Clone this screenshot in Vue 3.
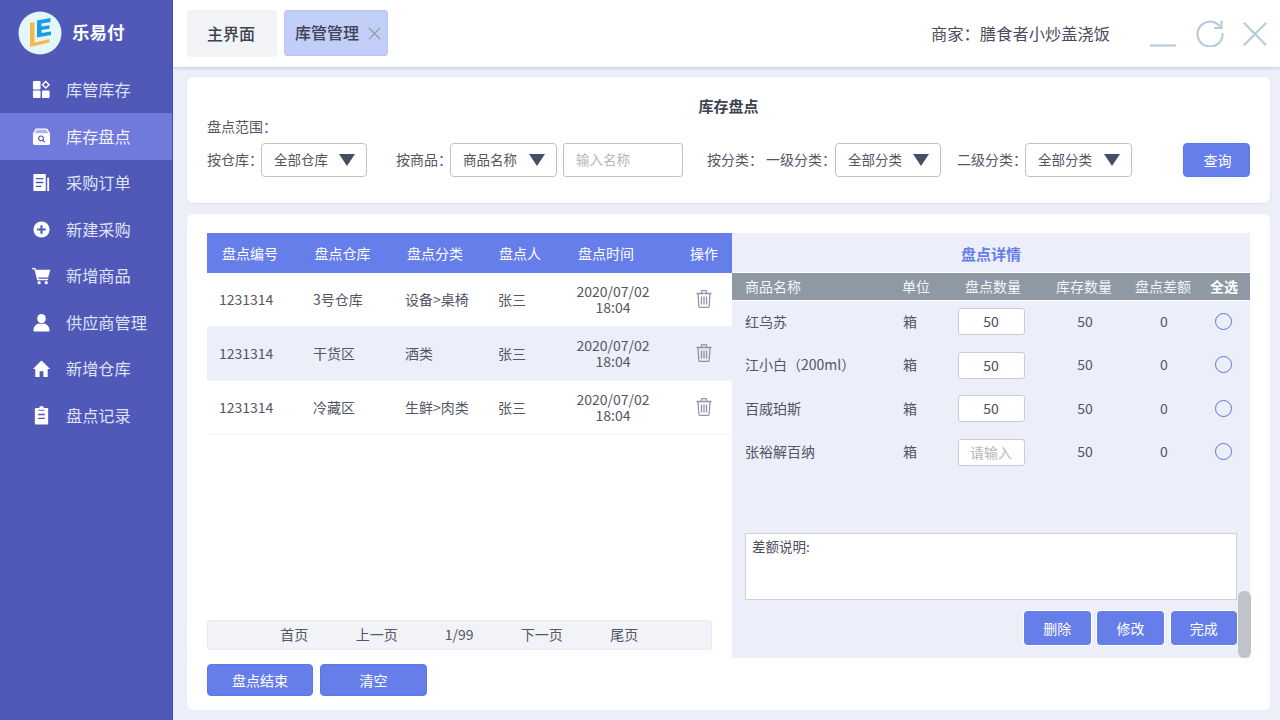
<script setup>
const nav = [
  { label: '库管库存', icon: 'grid' },
  { label: '库存盘点', icon: 'box', active: true },
  { label: '采购订单', icon: 'doc' },
  { label: '新建采购', icon: 'plus' },
  { label: '新增商品', icon: 'cart' },
  { label: '供应商管理', icon: 'user' },
  { label: '新增仓库', icon: 'home' },
  { label: '盘点记录', icon: 'clip' },
]
const filtersA = ['盘点编号', '盘点仓库', '盘点分类', '盘点人', '盘点时间', '操作']
const records = [
  { id: '1231314', store: '3号仓库', type: '设备>桌椅', who: '张三' },
  { id: '1231314', store: '干货区', type: '酒类', who: '张三' },
  { id: '1231314', store: '冷藏区', type: '生鲜>肉类', who: '张三' },
]
const detailHead = ['商品名称', '单位', '盘点数量', '库存数量', '盘点差额', '全选']
const details = [
  { name: '红乌苏', qty: '50' },
  { name: '江小白（200ml）', qty: '50' },
  { name: '百威珀斯', qty: '50' },
  { name: '张裕解百纳', qty: '' },
]
const pager = ['首页', '上一页', '1/99', '下一页', '尾页']
</script>

<template>
  <div class="app">
    <aside class="side">
      <div class="brand">
        <svg class="logo" viewBox="0 0 44 44">
          <circle cx="22" cy="22" r="21.500" fill="#e3f7fb" />
          <path d="M12 11.500h4.500v20l15-3.500v3.500l-19.500 4.500z" fill="#f7b84a" />
          <path d="M19 9.500l13.500-2.500v4l-9 1.500v3l8-1.200v3.500l-8 1.200v3l9.500-1.500v3.500l-14 2.500z" fill="#1c9be6" />
        </svg>
        <span class="brand-name">乐易付</span>
      </div>
      <nav>
        <div v-for="n in nav" :key="n.label" class="nav-item" :class="{ active: n.active }">
          <svg class="nav-icon" viewBox="0 0 20 20" fill="#fff">
            <template v-if="n.icon === 'grid'">
              <rect x="1" y="1" width="8" height="9" rx="1" />
              <rect x="1" y="11" width="8" height="8" rx="1" />
              <rect x="10.500" y="11" width="8" height="8" rx="1" />
              <path d="M14.500 1.500l3.500 3.500-3.500 3.500-3.500-3.500z" fill="none" stroke="#fff" stroke-width="1.500" />
            </template>
            <template v-else-if="n.icon === 'box'">
              <path d="M4 1.500h12l3 5v10.500a2 2 0 0 1-2 2H3a2 2 0 0 1-2-2V6.500z" />
              <path d="M2.500 6.500l2.500-3.500h10l2.500 3.500z" fill="#7079dc" opacity="0.550" />
              <circle cx="9.500" cy="12" r="2.500" fill="none" stroke="#5059b8" stroke-width="1.200" />
              <path d="M11.500 14l2 2" stroke="#5059b8" stroke-width="1.200" />
            </template>
            <template v-else-if="n.icon === 'doc'">
              <rect x="1.500" y="1" width="13" height="18" rx="0.500" />
              <rect x="16" y="5" width="2" height="14" />
              <path d="M4 6h8M4 10h8M4 14h6" stroke="#5059b8" stroke-width="1.400" />
            </template>
            <template v-else-if="n.icon === 'plus'">
              <circle cx="10" cy="10" r="8.500" />
              <path d="M10 5.500v9M5.500 10h9" stroke="#5059b8" stroke-width="2.200" />
            </template>
            <template v-else-if="n.icon === 'cart'">
              <path d="M0 2h3.500l.8 2h15l-2.300 8H6.500l.4 1.500H17v1.500H5.500L2.500 3.500H0z" />
              <circle cx="7.500" cy="17.500" r="1.700" />
              <circle cx="15" cy="17.500" r="1.700" />
            </template>
            <template v-else-if="n.icon === 'user'">
              <ellipse cx="10" cy="6" rx="4.500" ry="5" />
              <path d="M1.500 18.500c0-5 3.500-7 5.500-7.500 2 1 4 1 6 0 2 .5 5.500 2.500 5.500 7.500a1 1 0 0 1-1 1h-15a1 1 0 0 1-1-1z" />
            </template>
            <template v-else-if="n.icon === 'home'">
              <path d="M10 1.500L19 10.500h-2.500v8.500h-4.500v-6h-4v6H3.500v-8.500H1z" />
            </template>
            <template v-else>
              <path d="M7.500 2a2.500 2 0 0 1 5 0h3.500a1 1 0 0 1 1 1v15.500a1 1 0 0 1-1 1H4a1 1 0 0 1-1-1V3a1 1 0 0 1 1-1z" />
              <path d="M6.500 9h7M6.500 13h7" stroke="#5059b8" stroke-width="1.500" />
              <path d="M7 4.500h6" stroke="#5059b8" stroke-width="1" />
            </template>
          </svg>
          <span class="nav-label">{{ n.label }}</span>
        </div>
      </nav>
    </aside>

    <div class="main">
      <header class="top">
        <div class="tab tab-home">主界面</div>
        <div class="tab tab-active">
          库管管理
          <svg class="tab-x" viewBox="0 0 14 14"><path d="M1 1l12 12M13 1L1 13" stroke="#8f9199" stroke-width="1.100" fill="none" /></svg>
        </div>
        <div class="merchant">商家：膳食者小炒盖浇饭</div>
        <svg class="win win-min" viewBox="0 0 26 28"><path d="M0 26.500h26" stroke="#b8ccd8" stroke-width="2.200" /></svg>
        <svg class="win win-ref" viewBox="0 0 28 28" fill="none" stroke="#b8ccd8" stroke-width="2.200">
          <path d="M24 7.500A12.500 12.500 0 1 0 26.500 14" />
          <path d="M25.500 1.500v7.500h-7.500" />
        </svg>
        <svg class="win win-close" viewBox="0 0 24 24"><path d="M.8.800l22.400 22.400M23.200.800L.8 23.200" stroke="#b8ccd8" stroke-width="2.200" fill="none" /></svg>
      </header>

      <section class="panel filter">
        <h2>库存盘点</h2>
        <div class="scope">盘点范围：</div>
        <div class="filter-row">
          <span class="lab">按仓库：</span>
          <div class="select w106">全部仓库<i class="arrow"></i></div>
          <span class="lab ml29">按商品：</span>
          <div class="select w107">商品名称<i class="arrow"></i></div>
          <div class="name-input">输入名称</div>
          <span class="lab ml24">按分类：</span>
          <span class="lab ml10">一级分类：</span>
          <div class="select w106">全部分类<i class="arrow"></i></div>
          <span class="lab ml16">二级分类：</span>
          <div class="select w107">全部分类<i class="arrow"></i></div>
          <button class="btn query">查询</button>
        </div>
      </section>

      <section class="panel body">
        <div class="left">
          <div class="thead">
            <span v-for="h in filtersA" :key="h">{{ h }}</span>
          </div>
          <div v-for="(r, i) in records" :key="i" class="trow" :class="{ alt: i === 1 }">
            <span>{{ r.id }}</span>
            <span>{{ r.store }}</span>
            <span>{{ r.type }}</span>
            <span>{{ r.who }}</span>
            <span class="time">2020/07/02<br />18:04</span>
            <svg class="trash" viewBox="0 0 16 18" fill="none" stroke="#8e97a3" stroke-width="1.300">
              <path d="M.5 3.500h15M5.500 3.500V1.500a1 1 0 0 1 1-1h3a1 1 0 0 1 1 1v2" />
              <path d="M2 3.500l.8 12.500a1.500 1.500 0 0 0 1.500 1.400h7.400a1.500 1.500 0 0 0 1.500-1.400L14 3.500" />
              <path d="M5.500 6.500v8M8 6.500v8M10.500 6.500v8" />
            </svg>
          </div>
          <div class="spacer"></div>
          <div class="pager">
            <span v-for="p in pager" :key="p">{{ p }}</span>
          </div>
          <div class="left-actions">
            <button class="btn end">盘点结束</button>
            <button class="btn end clear">清空</button>
          </div>
        </div>

        <div class="right">
          <div class="right-title">盘点详情</div>
          <div class="dhead">
            <span v-for="h in detailHead" :key="h" :class="{ all: h === '全选' }">{{ h }}</span>
          </div>
          <div v-for="d in details" :key="d.name" class="drow">
            <span class="dname">{{ d.name }}</span>
            <span>箱</span>
            <span><input class="qty" :value="d.qty" placeholder="请输入" /></span>
            <span>50</span>
            <span>0</span>
            <span><i class="radio"></i></span>
          </div>
          <div class="spacer"></div>
          <textarea class="note" readonly>差额说明:</textarea>
          <div class="right-actions">
            <button class="btn act a66">删除</button>
            <button class="btn act">修改</button>
            <button class="btn act a66">完成</button>
          </div>
          <div class="thumb"></div>
        </div>
      </section>
    </div>
  </div>
</template>

<style>
html, body { margin: 0; background: #eceefa; }
</style>

<style scoped>
.app {
  width: 1280px;
  height: 720px;
  display: flex;
  overflow: hidden;
  background: #eceefa;
  color: #535665;
  font-family: "Noto Sans CJK SC", "Noto Sans", sans-serif;
  font-size: 14px;
}
.side {
  width: 173px;
  flex: none;
  background: #5059b8;
  border-right: 1px solid #4850ad;
  box-sizing: border-box;
}
.brand {
  height: 66.500px;
  display: flex;
  align-items: center;
  padding-left: 17.500px;
  gap: 10.500px;
}
.logo { width: 44px; height: 44px; }
.brand-name { color: #fff; font-size: 17.500px; font-weight: 700; padding-bottom: 3px; }
.nav-item {
  height: 46.500px;
  display: flex;
  align-items: center;
  padding-left: 32px;
  gap: 15px;
  color: #dfe2f7;
  font-size: 16.200px;
}
.nav-label { padding-bottom: 1px; }
.nav-item.active { background: #7079dc; color: #f2f3fd; }
.nav-icon { width: 19px; height: 19px; flex: none; }

.main { flex: 1; display: flex; flex-direction: column; min-width: 0; }
.top {
  height: 67px;
  flex: none;
  background: #fff;
  box-shadow: 0 1px 3px rgba(80, 90, 130, 0.25);
  display: flex;
  align-items: flex-start;
  padding: 10px 13px 0 14px;
  box-sizing: border-box;
  position: relative;
}
.tab {
  height: 47px;
  display: flex;
  align-items: center;
  border-radius: 3px;
  box-sizing: border-box;
  font-size: 16px;
  font-weight: 500;
  color: #3e4250;
  padding-bottom: 2px;
}
.tab-home { width: 90px; justify-content: center; background: #f2f3f7; padding-right: 2px; }
.tab-active {
  width: 104px;
  height: 46px;
  margin-left: 7px;
  padding-left: 10px;
  background: #c1cef8;
  border: 1px solid #b7c6f5;
}
.tab-x { width: 13px; height: 13px; margin-left: 9px; margin-top: 2px; }
.merchant { margin-left: auto; margin-top: 12px; font-size: 16.300px; color: #4a4d5c; line-height: 22px; width: 219px; white-space: nowrap; }
.win { flex: none; }
.win-min { width: 26px; height: 28px; margin-top: 9px; }
.win-ref { width: 28px; height: 28px; margin: 9px 0 0 20px; }
.win-close { width: 24px; height: 24px; margin: 12px 0 0 19px; }

.panel { background: #fff; border-radius: 6px; margin-left: 14px; width: 1083px; box-sizing: border-box; }
.filter { height: 126px; margin-top: 10px; padding: 19px 20px 0; box-shadow: 0 1px 3px rgba(80, 90, 130, 0.08); }
.filter h2 {
  margin: 0;
  text-align: center;
  font-size: 15px;
  font-weight: 700;
  line-height: 20px;
  color: #3e4250;
}
.scope { line-height: 20px; margin-top: 0; font-size: 14px; }
.filter-row { display: flex; align-items: center; margin-top: 7px; height: 34px; }
.lab { line-height: 32px; padding-bottom: 2px; white-space: nowrap; width: 54px; flex: none; }
.lab.ml29 { margin-left: 29px; }
.lab.ml24 { margin-left: 24px; width: 59px; }
.lab.ml10 { width: 69px; }
.lab.ml16 { margin-left: 16px; width: 68px; }
.select {
  height: 34px;
  border: 1px solid #bfc1cc;
  border-radius: 4px;
  box-sizing: border-box;
  padding: 0 0 2px 12px;
  display: flex;
  align-items: center;
  white-space: nowrap;
  font-size: 13.500px;
  flex: none;
  position: relative;
}
.w106 { width: 106px; }
.w107 { width: 107px; }
.arrow {
  position: absolute;
  right: 11px;
  top: 10px;
  width: 0;
  height: 0;
  border-left: 8px solid transparent;
  border-right: 8px solid transparent;
  border-top: 12px solid #474d63;
}
.name-input {
  width: 120px;
  height: 34px;
  margin-left: 6px;
  border: 1px solid #bfc1cc;
  border-radius: 3px;
  box-sizing: border-box;
  padding-left: 12px;
  line-height: 30px;
  color: #b5b7bf;
  flex: none;
  font-size: 13.500px;
}
.btn {
  border: 1px solid #5f77e6;
  background: #667eea;
  color: #fff;
  border-radius: 4px;
  font-family: inherit;
  font-size: 14px;
  padding: 0 0 1px;
  box-sizing: border-box;
}
.query { width: 67px; height: 34px; margin-left: 51px; flex: none; padding-left: 2px; }

.body {
  height: 496px;
  margin-top: 11px;
  padding: 19px 20px 0;
  display: flex;
  align-items: flex-start;
}
.left { width: 525px; height: 463px; flex: none; display: flex; flex-direction: column; }
.thead {
  height: 40px;
  flex: none;
  background: #667eea;
  color: #fff;
  display: grid;
  grid-template-columns: 86px 99px 86px 84px 88px 26px 56px;
  align-items: center;
  text-align: center;
}
.thead span:last-child { grid-column: 7; }
.trow {
  height: 54px;
  flex: none;
  display: grid;
  grid-template-columns: 94px 92px 93px 60px 110px 1fr;
  align-items: center;
  padding: 0 0 2px 12px;
  border-bottom: 1px solid #f3f4fb;
  box-sizing: border-box;
  line-height: 16px;
  white-space: nowrap;
}
.trow.alt { background: #eceefa; }
.time { text-align: center; }
.trash { width: 16px; height: 18px; justify-self: center; margin-left: 8px; }
.spacer { flex: 1; }
.pager {
  width: 505px;
  height: 30px;
  flex: none;
  box-sizing: border-box;
  background: #f2f3f7;
  border: 1px solid #e8eaf8;
  border-radius: 3px;
  display: flex;
  align-items: center;
  padding: 0 0 2px 45px;
}
.pager span { width: 82.500px; text-align: center; }
.left-actions { display: flex; gap: 7px; margin-top: 14px; flex: none; }
.end { width: 106px; height: 32px; }
.end.clear { width: 107px; }

.right {
  width: 518px;
  height: 425px;
  flex: none;
  background: #eceefa;
  display: flex;
  flex-direction: column;
  position: relative;
}
.right-title {
  height: 40px;
  flex: none;
  text-align: center;
  line-height: 41px;
  color: #667eea;
  font-weight: 700;
  font-size: 15px;
}
.dhead {
  height: 27px;
  flex: none;
  background: #8f99a5;
  color: #f3f5f8;
  display: grid;
  grid-template-columns: 13px 141px 60px 94px 88px 70px 52px;
  align-items: center;
  text-align: center;
  box-sizing: border-box;
  padding-bottom: 2px;
  box-shadow: 0 -1px 0 #fff, 0 1px 0 #fff;
}
.dhead span:first-child { grid-column: 2; text-align: left; }
.dhead .all { font-weight: 700; color: #fff; }
.drow {
  height: 43.500px;
  flex: none;
  display: grid;
  grid-template-columns: 13px 135px 60px 102px 86px 72px 46px;
  align-items: center;
  text-align: center;
  box-sizing: border-box;
}
.drow > span { line-height: 20px; }
.drow > span:not(:nth-child(3)):not(:nth-child(6)) { padding-bottom: 2px; }
.drow .dname { grid-column: 2; text-align: left; white-space: nowrap; }
.qty {
  width: 67px;
  height: 27px;
  border: 1px solid #c9cbd6;
  border-radius: 3px;
  box-sizing: border-box;
  background: #fff;
  text-align: center;
  font-family: inherit;
  font-size: 14px;
  color: #4a4d5c;
  padding: 0 0 1px;
  display: block;
  margin: 0 auto;
}
.qty::placeholder { color: #b5b7bf; opacity: 1; }
.radio {
  display: block;
  width: 17px;
  height: 17px;
  border: 1.300px solid #5a74e8;
  border-radius: 50%;
  margin: -1px auto 0;
  box-sizing: border-box;
}
.note {
  display: block;
  width: 492px;
  height: 67px;
  margin-left: 13px;
  flex: none;
  box-sizing: border-box;
  border: 1px solid #cfd1da;
  background: #fff;
  resize: none;
  outline: none;
  padding: 3px 6px;
  font-family: inherit;
  font-size: 13.500px;
  line-height: 18px;
  color: #4a4d5c;
  overflow: hidden;
}
.right-actions {
  display: flex;
  justify-content: flex-end;
  margin: 11px 13px 13px 0;
  flex: none;
}
.act { width: 67px; height: 34px; box-shadow: 0 0 0 1px #fff; border: none; margin-left: 6.500px; }
.a66 { width: 66.500px; }
.thumb {
  position: absolute;
  right: -1px;
  bottom: 0;
  width: 13px;
  height: 67px;
  background: #c0c4c9;
  border-radius: 6px;
}
</style>
